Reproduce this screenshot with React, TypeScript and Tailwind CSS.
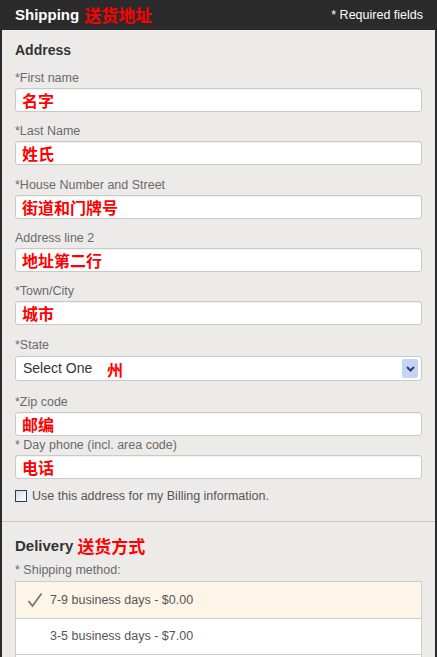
import React from "react";

const sans = { fontFamily: '"Liberation Sans", Arial, "Noto Sans CJK SC", sans-serif' };
const cjk = { fontFamily: '"Noto Sans CJK SC", "Liberation Sans", sans-serif' };

function Field({ label, value, mt }: { label: string; value: string; mt: string }) {
  return (
    <div className={mt}>
      <div className="h-[14px] text-[12.5px] leading-[14px] text-[#6a6a6a]">{label}</div>
      <div className="mt-[3px] flex h-[24px] items-center rounded-[3px] border border-[#c9c9c9] bg-white px-[6px] shadow-[inset_0_1px_1px_rgba(0,0,0,0.06)]">
        <span style={cjk} className="text-[16px] font-bold leading-[20px] text-[#ff0000]">
          {value}
        </span>
      </div>
    </div>
  );
}

export default function App() {
  return (
    <div style={sans} className="h-[657px] w-[437px] overflow-hidden bg-[#2b2b2b]">
      <div className="flex h-[30px] items-center justify-between pl-[15px] pr-[14px]">
        <div className="flex items-center">
          <span className="text-[15px] font-bold text-white">Shipping</span>
          <span style={cjk} className="ml-[5px] text-[17px] font-bold leading-[20px] text-[#ff0000]">
            送货地址
          </span>
        </div>
        <span className="text-[12.5px] text-white">* Required fields</span>
      </div>
      <div className="mx-[2px] h-[627px] bg-[#edebe9]">
        <div className="px-[13px] pt-[12px]">
          <div className="h-[17px] text-[14px] font-bold leading-[17px] text-[#333]">Address</div>
          <Field mt="mt-[12px]" label="*First name" value="名字" />
          <Field mt="mt-[12px]" label="*Last Name" value="姓氏" />
          <Field mt="mt-[13px]" label="*House Number and Street" value="街道和门牌号" />
          <Field mt="mt-[12px]" label="Address line 2" value="地址第二行" />
          <Field mt="mt-[12px]" label="*Town/City" value="城市" />
          <div className="mt-[13px]">
            <div className="h-[14px] text-[12.5px] leading-[14px] text-[#6a6a6a]">*State</div>
            <div className="mt-[4px] flex h-[25px] items-center rounded-[3px] border border-[#c9c9c9] bg-white pl-[7px] pr-[3px]">
              <span className="w-[84px] text-[14px] text-[#333]">Select One</span>
              <span style={cjk} className="text-[16px] font-bold text-[#ff0000]">州</span>
              <div className="ml-auto flex h-[19px] w-[16px] items-center justify-center rounded-[2px] bg-[#c4d4f7]">
                <svg width="9" height="6" viewBox="0 0 9 6">
                  <path d="M1 1 L4.5 4.5 L8 1" stroke="#2e3f66" strokeWidth="2" fill="none" />
                </svg>
              </div>
            </div>
          </div>
          <Field mt="mt-[14px]" label="*Zip code" value="邮编" />
          <Field mt="mt-[2px]" label="* Day phone (incl. area code)" value="电话" />
          <div className="mt-[10px] flex items-center">
            <div className="h-[12px] w-[12px] border border-[#1d3f61] bg-gradient-to-br from-[#dcdcdc] to-white" />
            <span className="ml-[5px] text-[12.5px] leading-[14px] text-[#555]">
              Use this address for my Billing information.
            </span>
          </div>
        </div>
        <div className="mt-[18px] h-px bg-[#cbc9c7]" />
        <div className="px-[13px] pt-[15px]">
          <div className="flex items-center">
            <span className="text-[15px] font-bold leading-[17px] text-[#333]">Delivery</span>
            <span style={cjk} className="ml-[4px] text-[17px] font-bold leading-[17px] text-[#ff0000]">
              送货方式
            </span>
          </div>
          <div className="mt-[9px] h-[14px] text-[12.5px] leading-[14px] text-[#6a6a6a]">* Shipping method:</div>
          <div className="mt-[4px] border border-[#cccccc] bg-white">
            <div className="flex h-[36px] items-center bg-[#fdf6e8]">
              <svg className="ml-[11px]" width="16" height="16" viewBox="0 0 16 16">
                <path d="M1.5 9 L5.5 14 L14.5 1.5" stroke="#777" strokeWidth="1.8" fill="none" />
              </svg>
              <span className="ml-[7px] text-[12.5px] text-[#555]">7-9 business days - $0.00</span>
            </div>
            <div className="flex h-[36px] items-center border-t border-[#cccccc]">
              <span className="ml-[34px] text-[12.5px] text-[#555]">3-5 business days - $7.00</span>
            </div>
            <div className="h-[36px] border-t border-[#cccccc]" />
          </div>
        </div>
      </div>
    </div>
  );
}
